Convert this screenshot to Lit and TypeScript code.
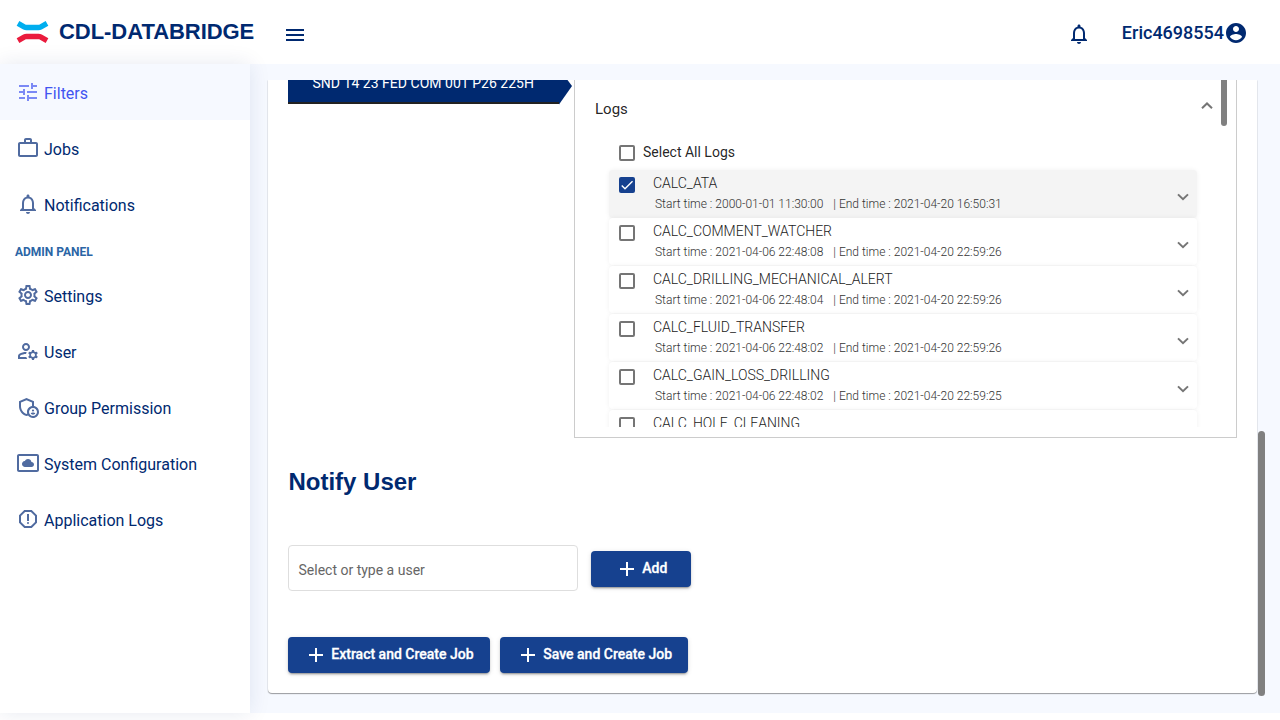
import { LitElement, html, css, svg } from "lit";
import { customElement, property } from "lit/decorators.js";
import { classMap } from "lit/directives/class-map.js";

const ICONS: Record<string, string> = {
  menu: "M3 18h18v-2H3v2zm0-5h18v-2H3v2zm0-7v2h18V6H3z",
  add: "M19 13h-6v6h-2v-6H5v-2h6V5h2v6h6v2z",
  tune: "M3 17v2h6v-2H3zM3 5v2h10V5H3zm10 16v-2h8v-2h-8v-2h-2v6h2zM7 9v2H3v2h4v2h2V9H7zm14 4v-2H11v2h10zm-6-4h2V7h4V5h-4V3h-2v6z",
  work: "M14 6V4h-4v2h4zM4 8v11h16V8H4zm16-2c1.11 0 2 .89 2 2v11c0 1.11-.89 2-2 2H4c-1.11 0-2-.89-2-2l.01-11c0-1.11.88-2 1.99-2h4V4c0-1.11.89-2 2-2h4c1.11 0 2 .89 2 2v2h4z",
  bell: "M12 22c1.1 0 2-.9 2-2h-4c0 1.1.9 2 2 2zm6-6v-5c0-3.07-1.63-5.64-4.5-6.32V4c0-.83-.67-1.5-1.5-1.5s-1.5.67-1.5 1.5v.68C7.64 5.36 6 7.92 6 11v5l-2 2v1h16v-1l-2-2zm-2 1H8v-6c0-2.48 1.51-4.5 4-4.5s4 2.02 4 4.5v6z",
  settings:
    "M19.43 12.98c.04-.32.07-.64.07-.98 0-.34-.03-.66-.07-.98l2.11-1.65c.19-.15.24-.42.12-.64l-2-3.46c-.09-.16-.26-.25-.44-.25-.06 0-.12.01-.17.03l-2.49 1c-.52-.4-1.08-.73-1.69-.98l-.38-2.65C14.46 2.18 14.25 2 14 2h-4c-.25 0-.46.18-.49.42l-.38 2.65c-.61.25-1.17.59-1.69.98l-2.49-1c-.06-.02-.12-.03-.18-.03-.17 0-.34.09-.43.25l-2 3.46c-.13.22-.07.49.12.64l2.11 1.65c-.04.32-.07.65-.07.98 0 .33.03.66.07.98l-2.11 1.65c-.19.15-.24.42-.12.64l2 3.46c.09.16.26.25.44.25.06 0 .12-.01.17-.03l2.49-1c.52.4 1.08.73 1.69.98l.38 2.65c.03.24.24.42.49.42h4c.25 0 .46-.18.49-.42l.38-2.65c.61-.25 1.17-.59 1.69-.98l2.49 1c.06.02.12.03.18.03.17 0 .34-.09.43-.25l2-3.46c.12-.22.07-.49-.12-.64l-2.11-1.65zm-1.98-1.71c.04.31.05.52.05.73 0 .21-.02.43-.05.73l-.14 1.13.89.7 1.08.84-.7 1.21-1.27-.51-1.04-.42-.9.68c-.43.32-.84.56-1.25.73l-1.06.43-.16 1.13-.2 1.35h-1.4l-.19-1.35-.16-1.13-1.06-.43c-.43-.18-.83-.41-1.23-.71l-.91-.7-1.06.43-1.27.51-.7-1.21 1.08-.84.89-.7-.14-1.13c-.03-.31-.05-.54-.05-.74s.02-.43.05-.73l.14-1.13-.89-.7-1.08-.84.7-1.21 1.27.51 1.04.42.9-.68c.43-.32.84-.56 1.25-.73l1.06-.43.16-1.13.2-1.35h1.39l.19 1.35.16 1.13 1.06.43c.43.18.83.41 1.23.71l.91.7 1.06-.43 1.27-.51.7 1.21-1.07.85-.89.7.14 1.13zM12 8c-2.21 0-4 1.79-4 4s1.79 4 4 4 4-1.79 4-4-1.79-4-4-4zm0 6c-1.1 0-2-.9-2-2s.9-2 2-2 2 .9 2 2-.9 2-2 2z",
  manage:
    "M4 18v-.65c0-.34.16-.66.41-.81C6.1 15.53 8.03 15 10 15c.03 0 .05 0 .08.01.1-.7.3-1.37.59-1.98-.22-.02-.44-.03-.67-.03-2.42 0-4.68.67-6.61 1.82-.88.52-1.39 1.5-1.39 2.53V20h9.26c-.42-.6-.75-1.28-.97-2H4zM10 12c2.21 0 4-1.79 4-4s-1.79-4-4-4-4 1.79-4 4 1.79 4 4 4zm0-6c1.1 0 2 .9 2 2s-.9 2-2 2-2-.9-2-2 .9-2 2-2zM20.75 16c0-.22-.03-.42-.06-.63l1.14-1.01-1-1.73-1.45.49c-.32-.27-.68-.48-1.08-.63L18 11h-2l-.3 1.49c-.4.15-.76.36-1.08.63l-1.45-.49-1 1.73 1.14 1.01c-.03.21-.06.41-.06.63s.03.42.06.63l-1.14 1.01 1 1.73 1.45-.49c.32.27.68.48 1.08.63L16 21h2l.3-1.49c.4-.15.76-.36 1.08-.63l1.45.49 1-1.73-1.14-1.01c.03-.21.06-.41.06-.63zM17 18c-1.1 0-2-.9-2-2s.9-2 2-2 2 .9 2 2-.9 2-2 2z",
  admin:
    "M18 11.09V6.27L10.5 3 3 6.27v4.91c0 4.54 3.2 8.79 7.5 9.82.55-.13 1.08-.32 1.6-.55C13.18 21.99 14.97 23 17 23c3.31 0 6-2.69 6-6 0-2.97-2.16-5.43-5-5.91zM11 17c0 .56.08 1.11.23 1.62-.24.11-.48.22-.73.3-3.17-1-5.5-4.24-5.5-7.74v-3.6l5.5-2.4 5.5 2.4v3.51c-2.84.48-5 2.94-5 5.91zm6 4c-2.21 0-4-1.79-4-4s1.79-4 4-4 4 1.79 4 4-1.79 4-4 4zM17 14.38a1.12 1.12 0 1 0 0 2.24 1.12 1.12 0 1 0 0-2.24zM17 17.5c-.73 0-2.19.36-2.24 1.08.5.71 1.32 1.17 2.24 1.17s1.74-.46 2.24-1.17c-.05-.72-1.51-1.08-2.24-1.08z",
  cloud:
    "M9 16h6.5c1.38 0 2.5-1.12 2.5-2.5S16.88 11 15.5 11h-.05c-.24-1.69-1.69-3-3.45-3-1.4 0-2.6.83-3.16 2.02h-.16C7.17 10.18 6 11.45 6 13c0 1.66 1.34 3 3 3zM21 3H3c-1.1 0-2 .9-2 2v14c0 1.1.9 2 2 2h18c1.1 0 2-.9 2-2V5c0-1.1-.9-2-2-2zm0 16.01H3V4.99h18v14.02z",
  report:
    "M15.73 3H8.27L3 8.27v7.46L8.27 21h7.46L21 15.73V8.27L15.73 3zM19 14.9L14.9 19H9.1L5 14.9V9.1L9.1 5h5.8L19 9.1v5.8zM11 7h2v7h-2zM12 15a1 1 0 1 0 0 2 1 1 0 1 0 0-2z",
  account:
    "M12 2C6.48 2 2 6.48 2 12s4.48 10 10 10 10-4.48 10-10S17.52 2 12 2zm0 3c1.66 0 3 1.34 3 3s-1.34 3-3 3-3-1.34-3-3 1.34-3 3-3zm0 14.2c-2.5 0-4.71-1.28-6-3.22.03-1.99 4-3.08 6-3.08 1.99 0 5.97 1.09 6 3.08-1.29 1.94-3.5 3.22-6 3.22z",
};

@customElement("md-icon")
class MdIcon extends LitElement {
  @property() name = "";
  static styles = css`
    :host { display: block; width: 24px; height: 24px; flex: none; }
    svg { display: block; width: 100%; height: 100%; fill: currentColor; }
  `;
  render() {
    return html`<svg viewBox="0 0 24 24">${svg`<path fill-rule="evenodd" d=${ICONS[this.name]}></path>`}</svg>`;
  }
}

@customElement("check-box")
class CheckBox extends LitElement {
  @property({ type: Boolean }) checked = false;
  static styles = css`
    :host { display: block; width: 16px; height: 16px; flex: none; }
    .box { box-sizing: border-box; width: 16px; height: 16px; border: 2px solid #757575; border-radius: 2px; }
    .on { border: 0; background: #16418f; }
    svg { display: block; width: 16px; height: 16px; }
  `;
  render() {
    return html`<div class=${classMap({ box: true, on: this.checked })}>
      ${this.checked
        ? html`<svg viewBox="0 0 24 24"><path d="M4.1 12.7L9 17.6 20.3 6.3" fill="none" stroke="#fff" stroke-width="2.1"></path></svg>`
        : ""}
    </div>`;
  }
}

@customElement("side-nav")
class SideNav extends LitElement {
  static styles = css`
    :host { display: block; width: 250px; height: 649px; flex: none; background: #fff; color: #002970;
      box-shadow: 0 0 20px rgba(1, 41, 112, 0.1); z-index: 1; }
    .item { display: flex; align-items: center; height: 56px; padding-left: 16px; gap: 4px; font-size: 16px; line-height: 24px; }
    md-icon { color: #506ba0; }
    .label { padding-top: 4px; }
    .active { background: #f6f9ff; color: #4154f1; }
    .active md-icon { color: #7b89f5; }
    .heading { height: 36px; box-sizing: border-box; padding: 12px 0 0 15px; font-size: 12px; line-height: 16px;
      font-weight: 700; color: #2b65a5; margin-bottom: -1px; letter-spacing: -0.02px; }
  `;
  item(icon: string, label: string, active = false) {
    return html`<div class=${classMap({ item: true, active })}><md-icon name=${icon}></md-icon><span class="label">${label}</span></div>`;
  }
  render() {
    return html`
      ${this.item("tune", "Filters", true)} ${this.item("work", "Jobs")} ${this.item("bell", "Notifications")}
      <div class="heading">ADMIN PANEL</div>
      ${this.item("settings", "Settings")} ${this.item("manage", "User")} ${this.item("admin", "Group Permission")}
      ${this.item("cloud", "System Configuration")} ${this.item("report", "Application Logs")}
    `;
  }
}

const LOGS = [
  ["CALC_ATA", "2000-01-01 11:30:00", "2021-04-20 16:50:31"],
  ["CALC_COMMENT_WATCHER", "2021-04-06 22:48:08", "2021-04-20 22:59:26"],
  ["CALC_DRILLING_MECHANICAL_ALERT", "2021-04-06 22:48:04", "2021-04-20 22:59:26"],
  ["CALC_FLUID_TRANSFER", "2021-04-06 22:48:02", "2021-04-20 22:59:26"],
  ["CALC_GAIN_LOSS_DRILLING", "2021-04-06 22:48:02", "2021-04-20 22:59:25"],
  ["CALC_HOLE_CLEANING", "", ""],
];

@customElement("log-panel")
class LogPanel extends LitElement {
  static styles = css`
    :host { display: block; box-sizing: border-box; width: 663px; height: 358px; border: 1px solid #ccc; border-top: 0;
      position: relative; }
    .scroll { height: 347px; overflow: hidden; }
    .head { display: flex; justify-content: space-between; align-items: center; height: 58px; padding: 0 23px 0 20px;
      font-size: 15px; color: rgba(0, 0, 0, 0.87); }
    .head .chev { margin-bottom: 6px; }
    .all { display: flex; gap: 8px; height: 32px; padding-left: 44px; font-size: 14px; line-height: 16px;
      color: rgba(0, 0, 0, 0.87); box-sizing: border-box; padding-top: 7px; }
    .all span { margin-top: -1px; }
    .list { width: 588px; margin-left: 34px; }
    .row { display: flex; height: 47px; margin-bottom: 1px; border-radius: 4px; background: #fff; padding: 0 8px 0 10px;
      box-sizing: border-box; box-shadow: 0 0 5px rgba(0, 0, 0, 0.06); }
    .row.sel { background: #f4f4f4; height: 48px; margin-bottom: 0; }
    .row check-box { margin-top: 7px; }
    .text { flex: 1; margin-left: 18px; padding-top: 4px; font-weight: 300; }
    .name { font-size: 14px; line-height: 18px; color: #222; }
    .time { display: flex; gap: 10px; font-size: 12px; line-height: 14px; padding: 5px 0 0 2px; color: #333; white-space: pre; }
    .chev { display: block; width: 12px; height: 8px; fill: none; stroke: #757575; stroke-width: 2; }
    .row .chev { margin-top: 23px; }
    .bar { position: absolute; left: 646px; top: 0; width: 6px; height: 46px; background: #808080; border-radius: 0 0 3px 3px; }
  `;
  render() {
    return html`
      <div class="scroll">
        <div class="head"><span>Logs</span><svg class="chev" viewBox="0 0 12 8"><path d="M1 6.3L6 1.5L11 6.3"></path></svg></div>
        <div class="all"><check-box></check-box><span>Select All Logs</span></div>
        <div class="list">
          ${LOGS.map(
            ([name, start, end], i) => html`<div class=${classMap({ row: true, sel: i === 0 })}>
              <check-box ?checked=${i === 0}></check-box>
              <div class="text">
                <div class="name">${name}</div>
                ${start ? html`<div class="time"><span>Start time : ${start}</span><span>| End time : ${end}</span></div>` : ""}
              </div>
              <svg class="chev" viewBox="0 0 12 8"><path d="M1 1.4L6 6.2L11 1.4"></path></svg>
            </div>`
          )}
        </div>
      </div>
      <div class="bar"></div>
    `;
  }
}

@customElement("app-root")
class AppRoot extends LitElement {
  static styles = css`
    :host { display: block; width: 1280px; height: 720px; overflow: hidden; background: #fff; font-family: Roboto, sans-serif; }
    .header { display: flex; height: 64px; align-items: center; box-sizing: border-box; padding: 0 32px 0 16px; color: #002970; }
    .logo { display: block; width: 33px; height: 24px; }
    .brand { font: 700 22px/26px "Liberation Sans", sans-serif; margin-left: 10px; width: 224px; white-space: nowrap; letter-spacing: -0.05px; }
    .header .menu { margin-top: 6px; }
    .header .bell { margin: 4px 31px 0 auto; }
    .user { display: flex; align-items: center; font-size: 18px; font-weight: 500; line-height: 24px; padding-top: 2px; }
    .body { display: flex; height: 649px; background: #f6f9ff; }
    .main { flex: 1; min-width: 0; padding: 16px 15px 0 17px; position: relative; }
    .view { width: 991px; height: 619px; overflow: hidden; }
    .card { box-sizing: border-box; width: 989px; margin-left: 1px; height: 613px; background: #fff; border-radius: 0 0 4px 4px; padding-left: 20px;
      box-shadow: 0 1px 1px rgba(0, 0, 0, 0.35), 0 0 2px rgba(0, 0, 0, 0.16); }
    .top { display: flex; height: 358px; width: 949px; justify-content: space-between; align-items: flex-start; }
    .well { display: flex; height: 24px; width: 286px; }
    .step { width: 271px; height: 24px; flex: none; box-sizing: border-box; background: #002970; border-bottom: 2px solid #222;
      color: #fff; font-size: 14px; line-height: 16px; padding-left: 24.5px; overflow: hidden; white-space: nowrap; letter-spacing: 0.02px; }
    .step span { display: block; margin-top: -5px; }
    .tip { display: block; width: 14px; height: 25px; flex: none; }
    h2 { margin: 30px 0 0 0.4px; font: 700 24px/28px "Liberation Sans", sans-serif; color: #002970; }
    .form { display: flex; gap: 13px; margin-top: 49px; align-items: flex-start; }
    .field { box-sizing: border-box; width: 290px; height: 46px; border: 1px solid #dedede; border-radius: 4px; padding: 15px 0 0 9.5px;
      font-size: 14px; line-height: 18px; color: #666; }
    .btn { display: flex; align-items: center; box-sizing: border-box; height: 36px; border-radius: 4px; background: #16418f; color: #fff;
      font-size: 14px; font-weight: 500; -webkit-text-stroke: 0.3px #fff; padding-left: 16px; white-space: nowrap;
      box-shadow: 0 3px 1px -2px rgba(0, 0, 0, 0.2), 0 2px 2px rgba(0, 0, 0, 0.14), 0 1px 5px rgba(0, 0, 0, 0.12); }
    .btn md-icon { margin: 0 3.3px 0 0; }
    .btn span { margin-top: -2px; }
    .add { width: 100px; margin-top: 6px; padding-left: 24px; }
    .actions { display: flex; gap: 10px; margin-top: 46px; }
    .extract { width: 202px; }
    .save { width: 188px; }
    .bar { position: absolute; left: 1008px; top: 367px; width: 7px; height: 265px; border-radius: 3.5px; background: #808080; }
  `;
  render() {
    return html`
      <div class="header">
        <svg class="logo" viewBox="0 0 33 24">
          <path d="M2 3.4L8.5 7.1Q9.3 7.5 10.5 7.5H22.5Q23.7 7.5 24.5 7.1L31 3.4" fill="none" stroke="#00aeef" stroke-width="5.4"></path>
          <path d="M2 20.6L8.5 16.9Q9.3 16.5 10.5 16.5H22.5Q23.7 16.5 24.5 16.9L31 20.6" fill="none" stroke="#ea1b3d" stroke-width="5.4"></path>
        </svg>
        <div class="brand">CDL-DATABRIDGE</div>
        <md-icon class="menu" name="menu"></md-icon>
        <md-icon class="bell" name="bell"></md-icon>
        <div class="user"><span>Eric4698554</span><md-icon name="account"></md-icon></div>
      </div>
      <div class="body">
        <side-nav></side-nav>
        <div class="main">
          <div class="view">
            <div class="card">
              <div class="top">
                <div class="well">
                  <div class="step"><span>SND 14 23 FED COM 001 P26 225H</span></div>
                  <svg class="tip" viewBox="0 0 14 25"><path d="M0 0H8.5L13 6L0 24.5Z" fill="#002970"></path></svg>
                </div>
                <log-panel></log-panel>
              </div>
              <h2>Notify User</h2>
              <div class="form">
                <div class="field">Select or type a user</div>
                <div class="btn add"><md-icon name="add"></md-icon><span>Add</span></div>
              </div>
              <div class="actions">
                <div class="btn extract"><md-icon name="add"></md-icon><span>Extract and Create Job</span></div>
                <div class="btn save"><md-icon name="add"></md-icon><span>Save and Create Job</span></div>
              </div>
            </div>
          </div>
          <div class="bar"></div>
        </div>
      </div>
    `;
  }
}
